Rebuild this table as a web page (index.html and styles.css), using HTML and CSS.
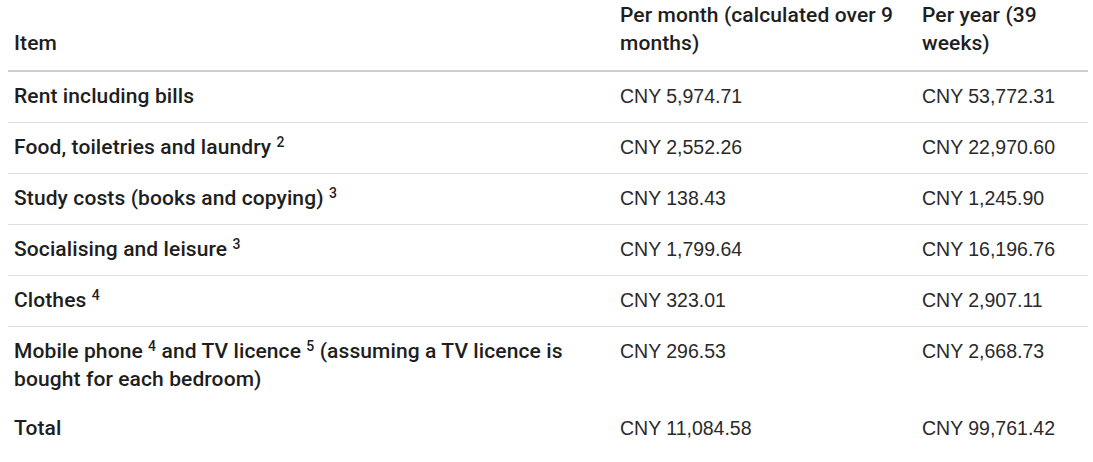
FILE: index.html
```html
<!DOCTYPE html>
<html lang="en">
<head>
<meta charset="utf-8">
<title>Living costs</title>
<link rel="stylesheet" href="styles.css">
</head>
<body>
<table class="costs">
  <colgroup>
    <col class="c-item">
    <col class="c-month">
    <col class="c-year">
  </colgroup>
  <thead>
    <tr>
      <th>Item</th>
      <th>Per month (calculated over 9 months)</th>
      <th>Per year (39 weeks)</th>
    </tr>
  </thead>
  <tbody>
    <tr><td class="label">Rent including bills</td><td>CNY 5,974.71</td><td>CNY 53,772.31</td></tr>
    <tr><td class="label">Food, toiletries and laundry <sup>2</sup></td><td>CNY 2,552.26</td><td>CNY 22,970.60</td></tr>
    <tr><td class="label">Study costs (books and copying) <sup>3</sup></td><td>CNY 138.43</td><td>CNY 1,245.90</td></tr>
    <tr><td class="label">Socialising and leisure <sup>3</sup></td><td>CNY 1,799.64</td><td>CNY 16,196.76</td></tr>
    <tr><td class="label">Clothes <sup>4</sup></td><td>CNY 323.01</td><td>CNY 2,907.11</td></tr>
    <tr class="last"><td class="label">Mobile phone <sup>4</sup> and TV licence <sup>5</sup> (assuming a TV licence is bought for each bedroom)</td><td>CNY 296.53</td><td>CNY 2,668.73</td></tr>
  </tbody>
  <tfoot>
    <tr><td class="label">Total</td><td>CNY 11,084.58</td><td>CNY 99,761.42</td></tr>
  </tfoot>
</table>
</body>
</html>
```
FILE: styles.css
```css
html, body {
  margin: 0;
  padding: 0;
  background: #fff;
}
body {
  padding: 0 8px;
  font-family: "Liberation Sans", Arial, sans-serif;
  color: #222;
}
.costs {
  width: 1080px;
  border-collapse: collapse;
  table-layout: fixed;
}
.c-item { width: 606px; }
.c-month { width: 302px; }
.c-year { width: 172px; }

.costs th {
  font-family: Roboto, "Noto Sans", sans-serif;
  font-weight: 500;
  font-size: 21px;
  letter-spacing: 0.1px;
  line-height: 28px;
  text-align: left;
  vertical-align: bottom;
  padding: 1px 6px 13px;
  border-bottom: 2px solid #cfcfcf;
  color: #1e1e1e;
}
.costs td {
  font-size: 19.5px;
  line-height: 28px;
  padding: 10px 6px 12px;
  vertical-align: top;
  color: #2a2a2a;
  border-bottom: 1px solid #dedede;
}
.costs td.label {
  font-family: Roboto, "Noto Sans", sans-serif;
  font-weight: 500;
  font-size: 21px;
  letter-spacing: 0.1px;
  color: #1e1e1e;
}
.costs tr.last td {
  border-bottom: none;
  padding-bottom: 11px;
}
.costs tfoot td {
  border-bottom: none;
}
.costs sup {
  font-size: 14px;
  line-height: 0;
  vertical-align: 7px;
}
```
